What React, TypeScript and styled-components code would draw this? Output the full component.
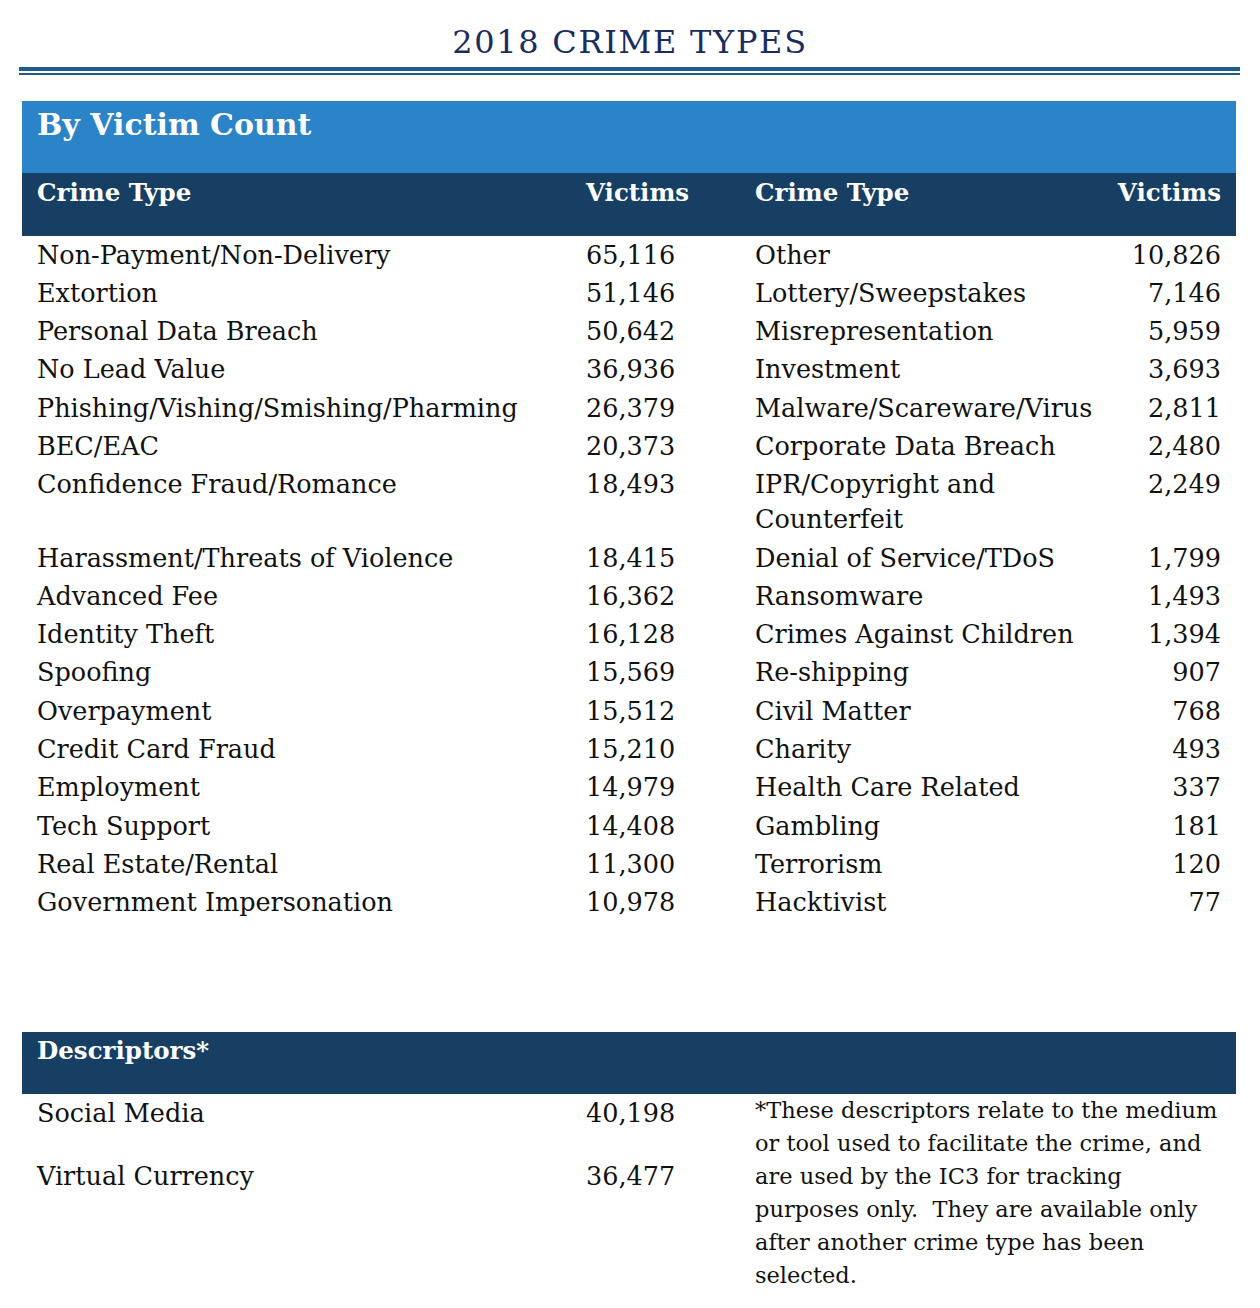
import React from 'react';
import styled, { createGlobalStyle } from 'styled-components';

const Global = createGlobalStyle`
  html, body { margin: 0; padding: 0; background: #fff; }
  body { font-family: "DejaVu Serif", "Liberation Serif", serif; color: #111; }
`;

const Page = styled.div`
  width: 1260px;
  padding-top: 19px;
  padding-bottom: 20px;
`;

const Title = styled.h1`
  margin: 0;
  text-align: center;
  font-size: 32px;
  font-weight: normal;
  letter-spacing: 1.7px;
  line-height: 46px;
  color: #1b2c5e;
`;

const Rules = styled.div`
  margin: 2px 20px 0 19px;
  display: flex;
  flex-direction: column;
  gap: 2px;
`;

const Rule = styled.div<{ $h: number }>`
  height: ${p => p.$h}px;
  background: #1f5b8b;
`;

const Section = styled.section`
  margin: 26px 24px 0 22px;
`;

const Banner = styled.div`
  height: 72px;
  padding: 0 15px;
  background: #2a84c7;
  color: #fff;
  font-weight: bold;
  font-size: 30px;
  line-height: 48px;
`;

const Grid = styled.div`
  display: grid;
  grid-template-columns: 549px 169px 1fr auto;
  padding: 0 15px;
`;

const HeadRow = styled(Grid)`
  height: 63px;
  box-sizing: border-box;
  padding-top: 2px;
  background: #173f63;
  color: #fff;
  font-weight: bold;
  font-size: 24.5px;
  line-height: 36px;
`;

const Row = styled(Grid)`
  font-size: 25.5px;
  line-height: 35px;
  padding-top: 1.65px;
  padding-bottom: 1.65px;
`;

const Cell = styled.div<{ $right?: boolean }>`
  text-align: ${p => (p.$right ? 'right' : 'left')};
  min-width: ${p => (p.$right ? '100px' : '0')};
`;

const DescBar = styled.div`
  margin-top: 110px;
  height: 62px;
  box-sizing: border-box;
  padding: 1px 15px 0;
  background: #173f63;
  color: #fff;
  font-weight: bold;
  font-size: 24.5px;
  line-height: 36px;
`;

const DescBody = styled.div`
  display: grid;
  grid-template-columns: 718px 1fr;
  padding: 0 15px;
`;

const DescList = styled.div`
  display: flex;
  flex-direction: column;
`;

const DescRow = styled.div`
  display: grid;
  grid-template-columns: 549px 169px;
  height: 63px;
  font-size: 25.5px;
  line-height: 38px;
`;

const Footnote = styled.p`
  margin: 0;
  font-size: 22.5px;
  line-height: 33px;
`;

const rows: [string, string, string, string][] = [
  ['Non-Payment/Non-Delivery', '65,116', 'Other', '10,826'],
  ['Extortion', '51,146', 'Lottery/Sweepstakes', '7,146'],
  ['Personal Data Breach', '50,642', 'Misrepresentation', '5,959'],
  ['No Lead Value', '36,936', 'Investment', '3,693'],
  ['Phishing/Vishing/Smishing/Pharming', '26,379', 'Malware/Scareware/Virus', '2,811'],
  ['BEC/EAC', '20,373', 'Corporate Data Breach', '2,480'],
  ['Confidence Fraud/Romance', '18,493', 'IPR/Copyright and Counterfeit', '2,249'],
  ['Harassment/Threats of Violence', '18,415', 'Denial of Service/TDoS', '1,799'],
  ['Advanced Fee', '16,362', 'Ransomware', '1,493'],
  ['Identity Theft', '16,128', 'Crimes Against Children', '1,394'],
  ['Spoofing', '15,569', 'Re-shipping', '907'],
  ['Overpayment', '15,512', 'Civil Matter', '768'],
  ['Credit Card Fraud', '15,210', 'Charity', '493'],
  ['Employment', '14,979', 'Health Care Related', '337'],
  ['Tech Support', '14,408', 'Gambling', '181'],
  ['Real Estate/Rental', '11,300', 'Terrorism', '120'],
  ['Government Impersonation', '10,978', 'Hacktivist', '77'],
];

const descriptors: [string, string][] = [
  ['Social Media', '40,198'],
  ['Virtual Currency', '36,477'],
];

export default function App() {
  return (
    <Page>
      <Global />
      <Title>2018 CRIME TYPES</Title>
      <Rules>
        <Rule $h={4} />
        <Rule $h={2} />
      </Rules>
      <Section>
        <Banner>By Victim Count</Banner>
        <HeadRow>
          <Cell>Crime Type</Cell>
          <Cell>Victims</Cell>
          <Cell>Crime Type</Cell>
          <Cell $right>Victims</Cell>
        </HeadRow>
        {rows.map(r => (
          <Row key={r[0]}>
            <Cell>{r[0]}</Cell>
            <Cell>{r[1]}</Cell>
            <Cell>{r[2]}</Cell>
            <Cell $right>{r[3]}</Cell>
          </Row>
        ))}
        <DescBar>Descriptors*</DescBar>
        <DescBody>
          <DescList>
            {descriptors.map(d => (
              <DescRow key={d[0]}>
                <Cell>{d[0]}</Cell>
                <Cell>{d[1]}</Cell>
              </DescRow>
            ))}
          </DescList>
          <Footnote>
            *These descriptors relate to the medium or tool used to facilitate the crime, and are used by the IC3 for tracking purposes only.&nbsp; They are available only after another crime type has been selected.
          </Footnote>
        </DescBody>
      </Section>
    </Page>
  );
}
